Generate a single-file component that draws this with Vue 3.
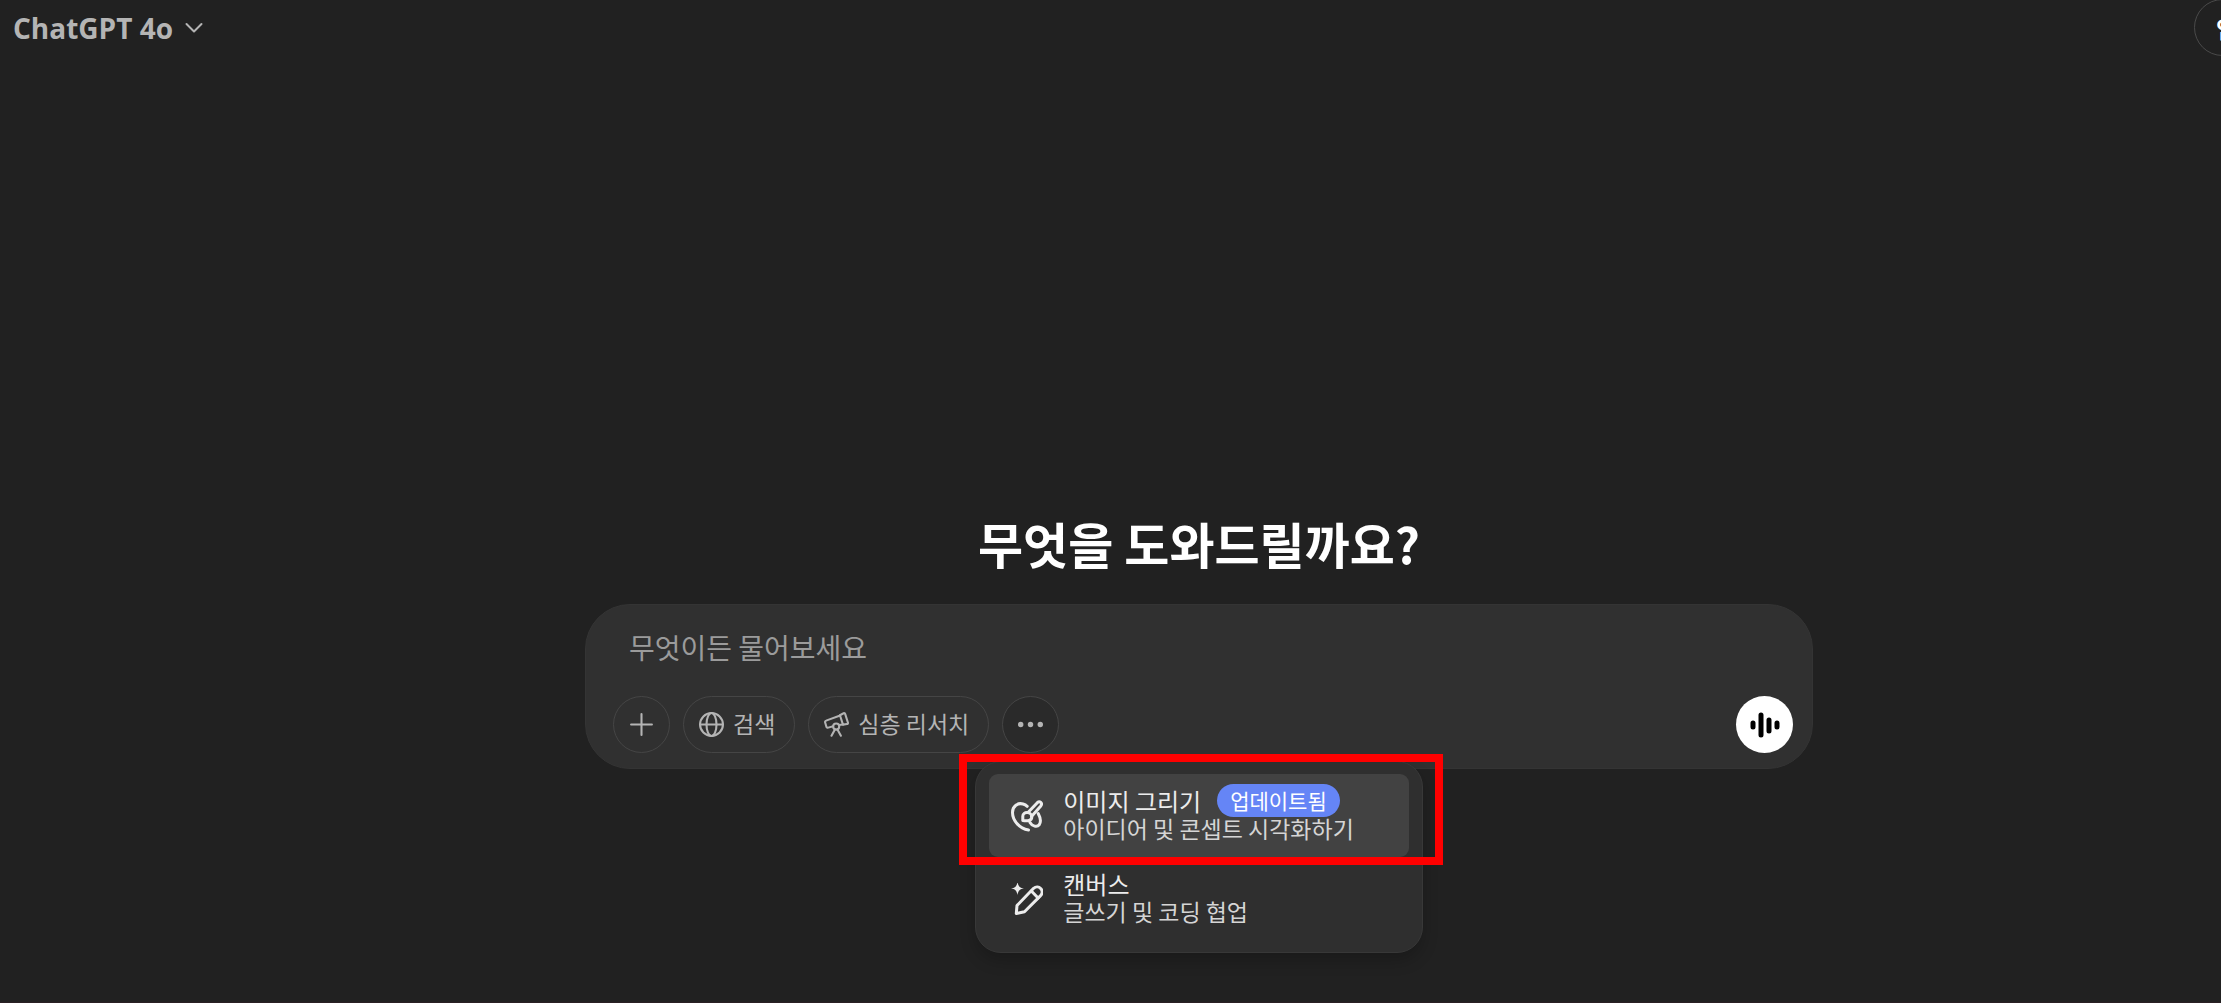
<template>
  <div class="page">
    <header class="header">
      <button class="model" type="button">
        ChatGPT 4o
        <svg class="chevron" viewBox="0 0 18 18" aria-hidden="true">
          <path d="M1.500 5 9 12.500l7.500-7.500" />
        </svg>
      </button>
      <button class="temporary" type="button">임시</button>
    </header>

    <main class="main">
      <h1 class="greeting">무엇을 도와드릴까요?</h1>

      <form class="composer" @submit.prevent>
        <input
          v-model="prompt"
          class="prompt"
          type="text"
          aria-label="무엇이든 물어보세요"
          placeholder="무엇이든 물어보세요"
        />
        <div class="toolbar">
          <button class="tool round" type="button" aria-label="+">
            <svg class="tool-icon" viewBox="0 0 24 24" aria-hidden="true">
              <path d="M12 2v20M2 12h20" />
            </svg>
          </button>
          <button class="tool" type="button">
            <svg class="tool-icon" viewBox="0 0 24 24" aria-hidden="true">
              <circle cx="12" cy="12" r="11" />
              <ellipse cx="12" cy="12" rx="4.800" ry="11" />
              <path d="M1 12h22" />
            </svg>
            <span class="label">검색</span>
          </button>
          <button class="tool" type="button">
            <svg class="tool-icon" viewBox="0 0 24 24" aria-hidden="true">
              <path d="M15.300 3.100 18.800 1.200a1 1 0 0 1 1.500.600l2.700 8.500a1 1 0 0 1-.900 1.300l-3.900.500z" />
              <path d="M15.500 3.300 2 8.300a1.400 1.400 0 0 0-.900 1.800l1.200 4a1.400 1.400 0 0 0 1.800.900l4.700-1.400M18.200 12l-3.700.500" />
              <circle cx="11.700" cy="14" r="2.900" />
              <path d="m10.500 16.700-3.300 6.100M12.900 16.700l3.300 6.100" />
            </svg>
            <span class="label">심층 리서치</span>
          </button>
          <div class="more">
            <button
              class="tool round active"
              type="button"
              aria-label="..."
              :aria-expanded="menuOpen"
              @click="menuOpen = !menuOpen"
            >
              <svg class="tool-icon dots" viewBox="0 0 24 24" aria-hidden="true">
                <circle cx="2.600" cy="12" r="2.600" />
                <circle cx="12" cy="12" r="2.600" />
                <circle cx="21.400" cy="12" r="2.600" />
              </svg>
            </button>

            <div v-if="menuOpen" class="menu">
              <button
                v-for="item in items"
                :key="item.id"
                class="item"
                :class="{ current: item.id === current }"
                type="button"
                @mouseenter="current = item.id"
              >
                <svg v-if="item.id === 'image'" class="item-icon" viewBox="0 0 32 32" aria-hidden="true">
                  <path d="M17.500 30C8 28.500 1.500 20 1.500 12.500 1.500 6 7 2.500 12 4c1.600.500 3 1.200 4.200 2.300" />
                  <path d="M27.200 13.500c2.400 4.500 3 8.500 1 11.300-2.200 2.800-7 1.500-9.200-2.300" />
                  <path d="M17 12.500 26.300 2.700c2.500-2.200 5.500.500 3.500 3.200L20.500 16.500" />
                  <path d="M11.800 20.500v-4.200c0-5.300 9-4.800 9 .600 0 4-4.500 4.300-9 3.600z" />
                </svg>
                <svg v-else class="item-icon" viewBox="0 0 32 32" aria-hidden="true">
                  <path class="solid" d="M6.500-1c.800 4.500 2.500 6 6.500 6.500-4 .500-5.700 2-6.500 6.500C5.700 7.500 4 6 0 5.500 4 5 5.700 3.500 6.500-1z" />
                  <path d="M5.300 30.500 6 22.500 22.600 5.300c5-4.300 11.500 2.200 7 7.300L13.500 28.800z" />
                  <path d="m20.300 8 6.800 7" />
                </svg>
                <span class="label">
                  <span class="item-title">
                    {{ item.title }}
                    <span v-if="item.badge" class="badge">{{ item.badge }}</span>
                  </span>
                  <span class="item-text">{{ item.text }}</span>
                </span>
              </button>
              <div class="highlight"></div>
            </div>
          </div>

          <button class="voice" type="button" aria-label="음성">
            <svg viewBox="0 0 30 30" aria-hidden="true">
              <path d="M3 13v4M11 5v20M19 10v11M27 13v4" />
            </svg>
          </button>
        </div>
      </form>
    </main>
  </div>
</template>

<script setup>
import { ref } from 'vue';

const prompt = ref('');
const menuOpen = ref(true);
const current = ref('image');

const items = [
  {
    id: 'image',
    title: '이미지 그리기',
    badge: '업데이트됨',
    text: '아이디어 및 콘셉트 시각화하기',
  },
  {
    id: 'canvas',
    title: '캔버스',
    text: '글쓰기 및 코딩 협업',
  },
];
</script>

<style>
body {
  background: #212121;
}
</style>

<style scoped>
.page {
  display: flex;
  flex-direction: column;
  box-sizing: border-box;
  min-height: 100vh;
  overflow: hidden;
  border-bottom: 1px solid #2a2024;
  background: #212121;
  color: #fff;
  font-family: 'Noto Sans CJK KR', sans-serif;
}

button {
  padding: 0;
  border: 0;
  background: none;
  color: inherit;
  font: inherit;
  cursor: pointer;
}

svg {
  flex: none;
  fill: none;
  stroke: currentColor;
  stroke-linecap: round;
  stroke-linejoin: round;
}

.header {
  display: flex;
  justify-content: space-between;
  height: 56px;
  padding-left: 13px;
}

.model {
  display: flex;
  align-items: center;
  gap: 12px;
  color: #b4b4b4;
  font-family: 'Open Sans', 'Noto Sans CJK KR', sans-serif;
  font-size: 28px;
  font-weight: 700;
}

.chevron {
  width: 18px;
  height: 18px;
  stroke-width: 2;
}

/* 오른쪽 끝에서 잘리는 버튼 */
.temporary {
  flex: none;
  box-sizing: border-box;
  height: 57px;
  width: 112px;
  margin: -1px -85px 0 0;
  padding-left: 21px;
  border: 1px solid #4a4a4a;
  border-radius: 29px;
  font-size: 23px;
  font-weight: 700;
  text-align: left;
}

.main {
  display: flex;
  flex-direction: column;
  align-items: center;
  padding: 452px 0 0 177px;
}

.greeting {
  margin: 0 0 26px;
  font-size: 49px;
  font-weight: 700;
  line-height: 70px;
}

.composer {
  display: flex;
  flex-direction: column;
  justify-content: space-between;
  box-sizing: border-box;
  width: 100%;
  max-width: 1228px;
  min-height: 165px;
  padding: 22px 19px 15px 27px;
  border: 1px solid #343434;
  border-radius: 45px;
  background: #303030;
}

.prompt {
  padding: 0 16px;
  border: 0;
  outline: 0;
  background: none;
  color: #fff;
  font: inherit;
  font-size: 28px;
  line-height: 40px;
}

.prompt::placeholder {
  color: #9b9b9b;
  opacity: 1;
}

.toolbar {
  display: flex;
  align-items: center;
  gap: 13px;
}

.tool {
  display: flex;
  align-items: center;
  justify-content: center;
  gap: 9px;
  box-sizing: border-box;
  height: 57px;
  padding: 0 19px 0 15px;
  border: 1px solid #454545;
  border-radius: 29px;
  color: #b4b4b4;
  font-size: 23px;
  white-space: nowrap;
}

/* 한글 글꼴의 시각적 중심 보정 */
.label {
  padding-bottom: 3px;
}

.round {
  width: 57px;
  padding: 0;
}

.active {
  background: #2a2a2a;
}

.tool-icon {
  width: 25px;
  height: 25px;
  stroke-width: 2;
}

.dots {
  fill: currentColor;
  stroke: none;
}

.more {
  position: relative;
}

.menu {
  position: absolute;
  top: 65px;
  left: -27px;
  box-sizing: border-box;
  width: 448px;
  padding: 12px 13px;
  border: 1px solid #383838;
  border-radius: 26px;
  background: #2f2f2f;
  box-shadow: 0 8px 16px rgba(0, 0, 0, 0.2);
}

.item {
  display: flex;
  align-items: center;
  gap: 20px;
  width: 100%;
  height: 83px;
  padding-left: 22px;
  border-radius: 9px;
  color: #ececec;
  text-align: left;
  white-space: nowrap;
}

.current {
  background: #424242;
}

.item-icon {
  width: 32px;
  height: 32px;
  stroke-width: 3;
}

.solid {
  fill: currentColor;
  stroke: none;
}

.item-title {
  display: flex;
  align-items: center;
  gap: 16px;
  height: 28px;
  font-size: 24px;
}

.item-text {
  display: block;
  color: #d5d5d5;
  font-size: 23px;
  line-height: 28px;
}

.badge {
  padding: 0 13px;
  border-radius: 17px;
  background: #6585f6;
  color: #fff;
  font-size: 21px;
  line-height: 33px;
}

/* 강조 표시 */
.highlight {
  position: absolute;
  top: -8px;
  left: -17px;
  right: -21px;
  box-sizing: border-box;
  height: 111px;
  border: 8px solid #f00;
  pointer-events: none;
}

.voice {
  display: flex;
  align-items: center;
  justify-content: center;
  width: 57px;
  height: 57px;
  margin-left: auto;
  border-radius: 50%;
  background: #fff;
  color: #000;
}

.voice svg {
  width: 30px;
  height: 30px;
  stroke-width: 5;
}
</style>
